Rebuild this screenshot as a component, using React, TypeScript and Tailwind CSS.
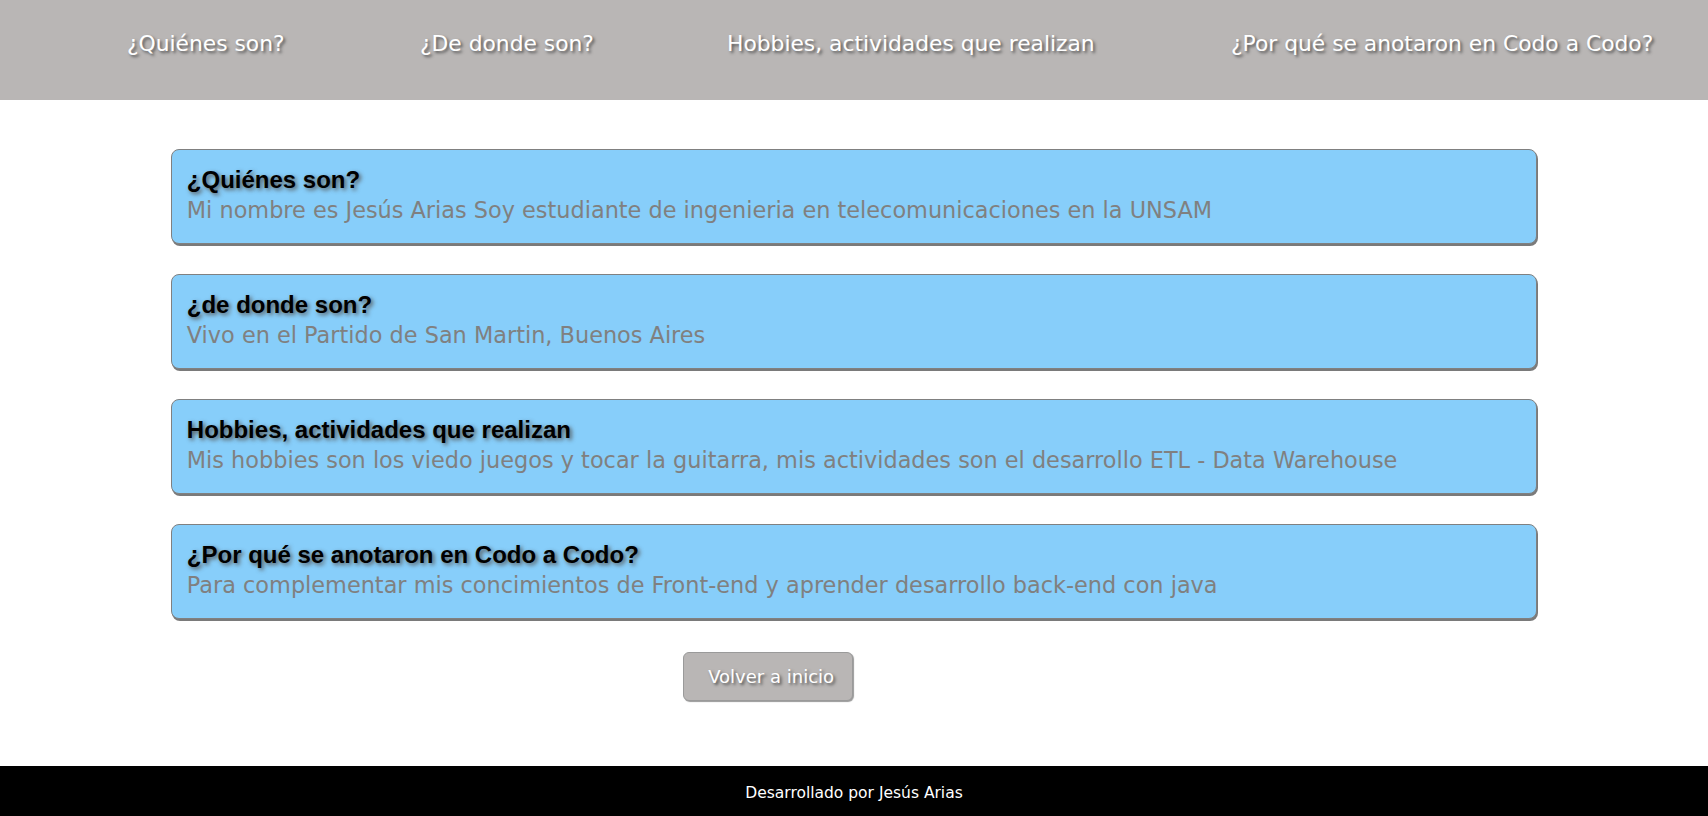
import React from 'react';

const comic = "font-['Comic_Sans_MS','DejaVu_Sans',sans-serif]";

const navItems = [
  { label: '¿Quiénes son?', width: 'w-[293px]' },
  { label: '¿De donde son?', width: 'w-[307px]' },
  { label: 'Hobbies, actividades que realizan', width: 'w-[504px]' },
  { label: '¿Por qué se anotaron en Codo a Codo?', width: 'w-auto' },
];

const cards = [
  {
    title: '¿Quiénes son?',
    text: 'Mi nombre es Jesús Arias Soy estudiante de ingenieria en telecomunicaciones en la UNSAM',
  },
  {
    title: '¿de donde son?',
    text: 'Vivo en el Partido de San Martin, Buenos Aires',
  },
  {
    title: 'Hobbies, actividades que realizan',
    text: 'Mis hobbies son los viedo juegos y tocar la guitarra, mis actividades son el desarrollo ETL - Data Warehouse',
  },
  {
    title: '¿Por qué se anotaron en Codo a Codo?',
    text: 'Para complementar mis concimientos de Front-end y aprender desarrollo back-end con java',
  },
];

const App: React.FC = () => {
  return (
    <div className="min-h-[816px] w-full bg-white flex flex-col">
      <nav className="h-[100px] bg-[#b9b6b5] flex items-start pl-[127px] pt-[28px]">
        {navItems.map((item) => (
          <div key={item.label} className={`${item.width} shrink-0`}>
            <a
              href="#"
              className={`${comic} text-[21.8px] leading-[32px] text-white whitespace-nowrap [text-shadow:2px_2px_3px_#555]`}
            >
              {item.label}
            </a>
          </div>
        ))}
      </nav>

      <main className="flex-1 flex flex-col">
        <div className="w-[80%] mx-auto mt-[49px] flex flex-col gap-[30px]">
          {cards.map((card) => (
            <section
              key={card.title}
              className="bg-[#87cefa] border border-[#808080] rounded-lg px-[15px] pt-[16px] pb-[16px] shadow-[1px_2px_0_#7a7a7a]"
            >
              <h2 className="font-['Liberation_Sans',Arial,sans-serif] font-bold text-[24px] leading-[28px] text-black [text-shadow:2px_2px_4px_#555]">
                {card.title}
              </h2>
              <p className={`${comic} text-[22.4px] leading-[33px] text-[#808080]`}>
                {card.text}
              </p>
            </section>
          ))}
        </div>

        <div className="mt-[33px] ml-[40%]">
          <button
            type="button"
            className={`${comic} w-[170px] h-[49px] pl-[24px] text-left bg-[#b9b6b5] border border-[#9a9a9a] rounded-md text-[18px] text-white [text-shadow:2px_2px_3px_#555] shadow-[1px_1px_1px_#999]`}
          >
            Volver a inicio
          </button>
        </div>
      </main>

      <footer className="h-[50px] mt-[62px] bg-black flex items-center justify-center pt-[5px]">
        <p className={`${comic} text-white text-[15.5px]`}>Desarrollado por Jesús Arias</p>
      </footer>
    </div>
  );
};

export default App;
